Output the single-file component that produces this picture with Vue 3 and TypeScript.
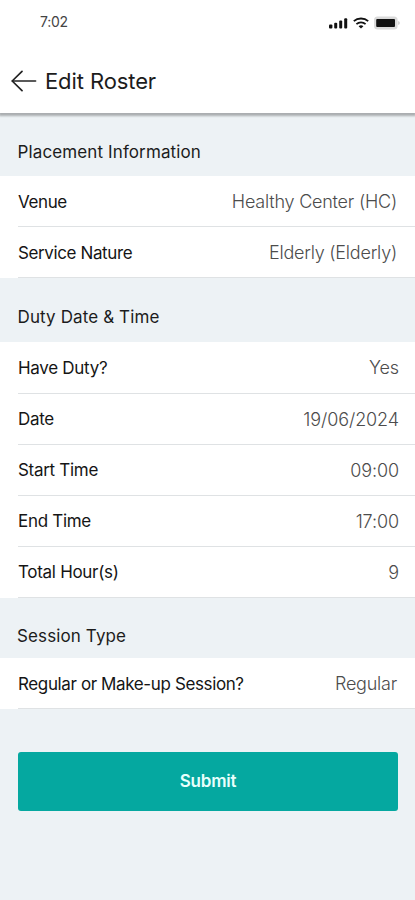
<script setup lang="ts">
interface Row {
  label: string
  value: string
}

interface Section {
  id: string
  title: string
  rows: Row[]
}

const sections: Section[] = [
  {
    id: 'placement',
    title: 'Placement Information',
    rows: [
      { label: 'Venue', value: 'Healthy Center (HC)' },
      { label: 'Service Nature', value: 'Elderly (Elderly)' },
    ],
  },
  {
    id: 'duty',
    title: 'Duty Date & Time',
    rows: [
      { label: 'Have Duty?', value: 'Yes' },
      { label: 'Date', value: '19/06/2024' },
      { label: 'Start Time', value: '09:00' },
      { label: 'End Time', value: '17:00' },
      { label: 'Total Hour(s)', value: '9' },
    ],
  },
  {
    id: 'session',
    title: 'Session Type',
    rows: [{ label: 'Regular or Make-up Session?', value: 'Regular' }],
  },
]
</script>

<template>
  <div class="screen">
    <header class="top">
      <div class="status">
        <span class="clock">7:02</span>
        <div class="indicators">
          <svg class="signal" width="19" height="12" viewBox="0 0 19 12" fill="#111">
            <rect x="0" y="7.6" width="3.4" height="4" rx="1" />
            <rect x="5.2" y="5.8" width="3" height="5.8" rx="1" />
            <rect x="10.2" y="3.6" width="3" height="8" rx="1" />
            <rect x="15.2" y="1.2" width="3" height="10.4" rx="1" />
          </svg>
          <svg class="wifi" width="16" height="12" viewBox="0 0 16 12" fill="none" stroke="#111" stroke-width="1.8">
            <path d="M0.8 4.2C4.8 0.6 11.2 0.6 15.2 4.2" />
            <path d="M3.4 7.1C6 4.7 10 4.7 12.6 7.1" />
            <path d="M5.6 9.2C7 8 9 8 10.4 9.2L8 11.6Z" fill="#111" stroke="none" />
          </svg>
          <svg class="battery" width="27" height="14" viewBox="0 0 27 14">
            <rect x="0" y="0.4" width="23.6" height="13.2" rx="3.6" fill="#dadada" />
            <rect x="2.2" y="3" width="18.8" height="8" rx="1" fill="#111" />
            <path d="M24.4 5V9C26 8.4 26 5.6 24.4 5Z" fill="#bbb" />
          </svg>
        </div>
      </div>
      <div class="nav">
        <button class="back" type="button" aria-label="Back">
          <svg width="26" height="22" viewBox="0 0 26 22" fill="none" stroke-linecap="round" stroke-linejoin="round">
            <path d="M1.5 11H24.5" stroke="#5a5a5a" stroke-width="1.8" />
            <path d="M11 1.3L1.2 11L11 20.7" stroke="#222" stroke-width="1.7" />
          </svg>
        </button>
        <h1>Edit Roster</h1>
      </div>
    </header>

    <main>
      <section v-for="section in sections" :key="section.id" :class="section.id">
        <h2>{{ section.title }}</h2>
        <dl>
          <div v-for="row in section.rows" :key="row.label" class="row">
            <dt>{{ row.label }}</dt>
            <dd>{{ row.value }}</dd>
          </div>
        </dl>
      </section>
      <button class="submit" type="button">Submit</button>
    </main>
  </div>
</template>

<style>
body {
  margin: 0;
  background: #edf2f5;
}
</style>

<style scoped>
.screen {
  display: flex;
  flex-direction: column;
  height: 900px;
  overflow: hidden;
  background: #edf2f5;
  color: #1c1c1c;
  font-family: Inter, 'Liberation Sans', sans-serif;
}

.top {
  position: relative;
  box-sizing: border-box;
  height: 113px;
  background: #fff;
  box-shadow: 0 2px 2px 1px rgba(0, 0, 0, 0.28);
}

.status {
  display: flex;
  justify-content: space-between;
  align-items: center;
  height: 46px;
  padding: 0 14px 0 40px;
}

.clock {
  margin-top: -3px;
  color: #444;
  font-size: 14px;
  letter-spacing: -0.3px;
}

.indicators {
  display: flex;
  align-items: center;
  gap: 5px;
}

.nav {
  display: flex;
  align-items: center;
  gap: 8px;
  height: 70px;
  padding-left: 11px;
}

.back {
  display: flex;
  padding: 0;
  border: 0;
  background: none;
}

h1 {
  margin: 0;
  font-size: 22px;
  font-weight: 400;
  letter-spacing: -0.1px;
}

h2 {
  display: flex;
  align-items: flex-end;
  box-sizing: border-box;
  height: 63px;
  margin: 0;
  padding: 0 17.5px 14px;
  font-size: 17px;
  font-weight: 400;
  line-height: 20px;
  letter-spacing: 0.12px;
}

.duty h2 {
  height: 64px;
  padding-bottom: 15px;
}

.session h2 {
  height: 60px;
  padding: 0 17px 12px;
}

dl {
  margin: 0;
  padding-left: 18px;
  background: #fff;
}

.row {
  display: flex;
  justify-content: space-between;
  align-items: center;
  box-sizing: border-box;
  height: 51px;
  padding-right: 18px;
  border-bottom: 1px solid #dfe2e4;
  font-size: 17px;
}

.duty .row {
  padding-right: 16px;
}

.duty .row:first-child {
  height: 52px;
}

dt {
  padding-top: 2px;
  color: #151515;
  letter-spacing: -0.38px;
}

.duty dt {
  padding-top: 0;
  letter-spacing: -0.3px;
}

dd {
  margin: 0;
  color: #4c4c4c;
  font-weight: 300;
  font-size: 18px;
  letter-spacing: -0.22px;
}

.duty dd {
  letter-spacing: -0.1px;
}

.submit {
  display: block;
  width: 380px;
  height: 59px;
  margin: 43px 0 0 18px;
  padding: 0 0 2px;
  border: 0;
  border-radius: 3px;
  background: #05a8a0;
  color: #e8fffc;
  font-family: inherit;
  font-size: 17px;
  font-weight: 600;
  letter-spacing: -0.2px;
}
</style>
